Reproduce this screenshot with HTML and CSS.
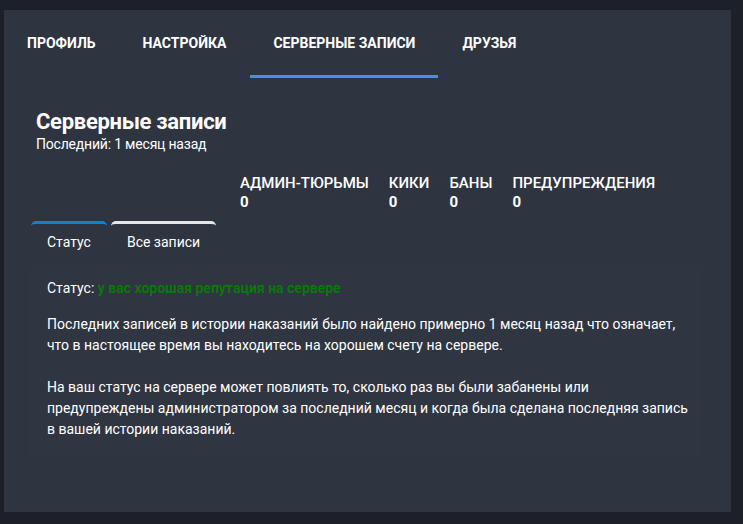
FILE: index.html
```html
<!DOCTYPE html>
<html lang="ru">
<head>
    <meta charset="UTF-8">
    <meta name="viewport" content="width=device-width, initial-scale=1.0">
    <title>Серверные записи</title>
    <link rel="stylesheet" href="styles.css">
</head>
<body>
    <div class="panel">
        <!-- Верхние вкладки -->
        <nav class="tabs">
            <a class="tab">Профиль</a>
            <a class="tab">Настройка</a>
            <a class="tab active">Серверные записи</a>
            <a class="tab">Друзья</a>
        </nav>

        <div class="content">
            <div class="summary">
                <h2>Серверные записи</h2>
                <div class="last">Последний: 1 месяц назад</div>
            </div>

            <div class="stats">
                <div class="stat">
                    <div class="stat-label">Админ-тюрьмы</div>
                    <div class="stat-value">0</div>
                </div>
                <div class="stat">
                    <div class="stat-label">Кики</div>
                    <div class="stat-value">0</div>
                </div>
                <div class="stat">
                    <div class="stat-label">Баны</div>
                    <div class="stat-value">0</div>
                </div>
                <div class="stat">
                    <div class="stat-label">Предупреждения</div>
                    <div class="stat-value">0</div>
                </div>
            </div>

            <div class="subtabs">
                <button type="button" class="subtab active">Статус</button>
                <button type="button" class="subtab">Все записи</button>
            </div>

            <div class="record-box">
                <div class="status">Статус: <span class="good">у вас хорошая репутация на сервере</span></div>
                <p>Последних записей в истории наказаний было найдено примерно 1 месяц назад что означает, что в настоящее время вы находитесь на хорошем счету на сервере.</p>
                <p>На ваш статус на сервере может повлиять то, сколько раз вы были забанены или предупреждены администратором за последний месяц и когда была сделана последняя запись в вашей истории наказаний.</p>
            </div>
        </div>
    </div>
</body>
</html>
```

FILE: styles.css
```css
body {
    margin: 0;
    padding: 10px 12px 12px 4px;
    background: #1e2029;
    font-family: Roboto, "Liberation Sans", Arial, sans-serif;
    color: #fff;
}
.panel {
    background: #2e3440;
    height: 502px;
}
.tabs {
    display: flex;
    gap: 1px;
}
.tab {
    display: flex;
    align-items: center;
    height: 65px;
    padding: 0 23px;
    border-bottom: 3px solid transparent;
    font-size: 14px;
    font-weight: 700;
    text-transform: uppercase;
    color: #fff;
    cursor: pointer;
}
.tab.active {
    border-bottom-color: #4a8cec;
}
.content {
    padding: 0 30px 0 25px;
}
.summary {
    padding: 30px 7px 0;
}
h2 {
    margin: 0;
    font-size: 22px;
    line-height: 27px;
    font-weight: 700;
    letter-spacing: -0.3px;
}
.last {
    font-size: 14px;
    line-height: 18px;
    letter-spacing: -0.2px;
}
.stats {
    display: flex;
    gap: 20px;
    margin: 21px 0 0 211px;
}
.stat-label {
    font-size: 15px;
    line-height: 18px;
    font-weight: 500;
    text-transform: uppercase;
}
.stat-value {
    font-size: 15px;
    line-height: 20px;
    font-weight: 700;
}
.subtabs {
    display: flex;
    gap: 4px;
    margin: 9px 0 0 2px;
}
.subtab {
    padding: 8px 16px 13px;
    background: none;
    border: none;
    border-top: 3px solid #e6e6e6;
    border-radius: 5px 5px 0 0;
    font-family: inherit;
    font-size: 14px;
    line-height: 20px;
    color: #fff;
    cursor: pointer;
}
.subtab.active {
    border-top-color: #0a84d0;
}
.record-box {
    background: #2f3541;
    padding: 13px 12px 16px 18px;
    font-size: 14px;
    line-height: 21px;
}
.good {
    color: #0a780a;
    font-weight: 700;
}
.record-box p {
    margin: 15px 0 0;
}
.record-box p + p {
    margin-top: 21px;
}
```
